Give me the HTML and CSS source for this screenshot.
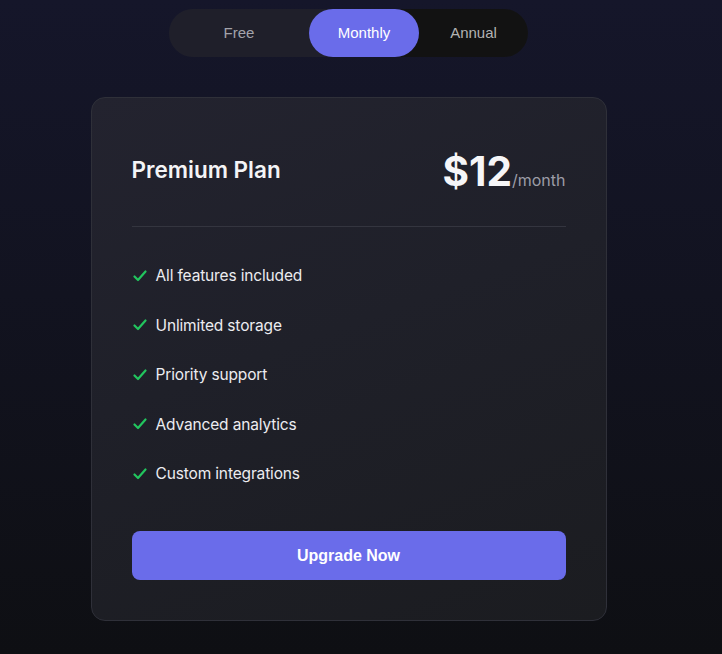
FILE: index.html
```html
<!DOCTYPE html>
<html lang="en">
<head>
<meta charset="utf-8">
<title>Pricing</title>
<link rel="stylesheet" href="styles.css">
</head>
<body>
<main class="page">
  <div class="toggle">
    <button class="tab tab-free">Free</button>
    <button class="tab tab-monthly">Monthly</button>
    <button class="tab tab-annual">Annual</button>
  </div>
  <section class="card">
    <header class="card-head">
      <h2 class="plan">Premium Plan</h2>
      <div class="price"><span class="amount">$12</span><span class="period">/month</span></div>
    </header>
    <ul class="features">
      <li><svg class="check" viewBox="0 0 14 12"><polyline points="1.5,6.5 5,10 12.5,1.5"/></svg>All features included</li>
      <li><svg class="check" viewBox="0 0 14 12"><polyline points="1.5,6.5 5,10 12.5,1.5"/></svg>Unlimited storage</li>
      <li><svg class="check" viewBox="0 0 14 12"><polyline points="1.5,6.5 5,10 12.5,1.5"/></svg>Priority support</li>
      <li><svg class="check" viewBox="0 0 14 12"><polyline points="1.5,6.5 5,10 12.5,1.5"/></svg>Advanced analytics</li>
      <li><svg class="check" viewBox="0 0 14 12"><polyline points="1.5,6.5 5,10 12.5,1.5"/></svg>Custom integrations</li>
    </ul>
    <button class="cta">Upgrade Now</button>
  </section>
</main>
</body>
</html>
```

FILE: styles.css
```css
html, body {
  margin: 0;
  height: 100%;
}
body {
  background: linear-gradient(180deg, #15162a 0%, #121320 45%, #0e0f13 100%);
  font-family: Inter, "Noto Sans", sans-serif;
  color: #f2f2f5;
  overflow: hidden;
}
.page {
  width: 697px;
  display: flex;
  flex-direction: column;
  align-items: center;
  padding-top: 9px;
}
.toggle {
  display: flex;
  height: 48px;
  border-radius: 24px;
  background: linear-gradient(90deg, #1f1f2a 50%, #121212 50%);
}
.tab {
  border: 0;
  background: transparent;
  font-family: "Liberation Sans", Arial, sans-serif;
  font-size: 15px;
  height: 48px;
  padding: 0 0 2px;
  border-radius: 24px;
  cursor: pointer;
}
.tab-free { width: 140px; color: #a3a3ab; }
.tab-monthly { width: 110px; color: #ffffff; background: #6a6cea; }
.tab-annual { width: 109px; color: #b3b3b3; }
.card {
  margin-top: 40px;
  width: 516px;
  box-sizing: border-box;
  padding: 48px 40px 40px;
  border: 1px solid #2f3039;
  border-radius: 14px;
  background: linear-gradient(160deg, #23232f 0%, #1f2029 45%, #1b1c20 100%);
}
.card-head {
  display: flex;
  justify-content: space-between;
  align-items: center;
  height: 48px;
  padding-bottom: 32px;
  border-bottom: 1px solid #34353f;
}
.plan {
  margin: 0 0 2px;
  font-size: 22.5px;
  font-weight: 600;
  color: #f4f4f6;
}
.price {
  display: flex;
  align-items: baseline;
  margin-top: 3px;
}
.amount {
  font-size: 40.5px;
  font-weight: 700;
  color: #f6f6f8;
  line-height: 48px;
}
.period {
  font-size: 16px;
  color: #9c9ca6;
}
.features {
  list-style: none;
  margin: 24px 0 32px;
  padding: 0;
}
.features li {
  display: flex;
  align-items: center;
  height: 49.5px;
  font-size: 15.5px;
  letter-spacing: -0.15px;
  color: #ececf0;
}
.check {
  width: 14px;
  height: 12px;
  margin-left: 1px;
  margin-right: 9px;
  fill: none;
  stroke: #22c55e;
  stroke-width: 2.2;
  stroke-linecap: round;
  stroke-linejoin: round;
}
.cta {
  display: block;
  width: 100%;
  height: 49px;
  border: 0;
  border-radius: 8px;
  background: #6a6cea;
  color: #ffffff;
  font-family: "Liberation Sans", Arial, sans-serif;
  font-size: 16px;
  font-weight: 700;
  padding: 2px 0 0;
  cursor: pointer;
}
```
